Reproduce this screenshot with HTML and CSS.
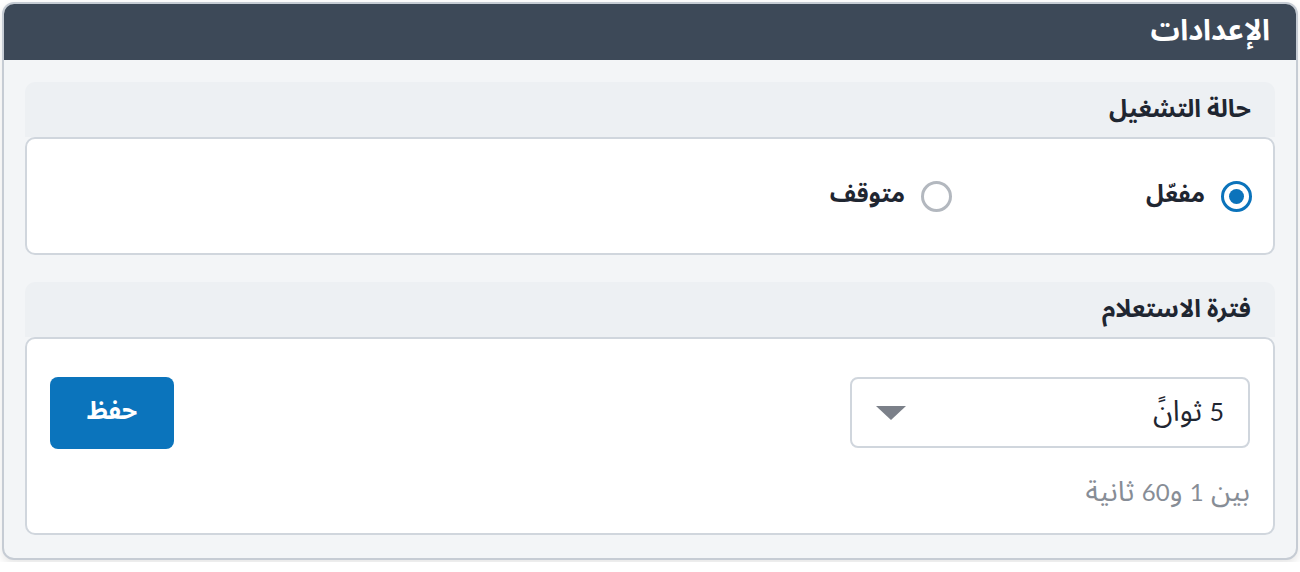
FILE: index.html
```html
<!DOCTYPE html>
<html lang="ar" dir="rtl">
<head>
<meta charset="utf-8">
<title>الإعدادات</title>
<link rel="stylesheet" href="styles.css">
</head>
<body>
<div class="panel">
  <div class="panel-header">الإعدادات</div>
  <div class="panel-body">
    <section class="group">
      <div class="group-title">حالة التشغيل</div>
      <div class="group-box radios">
        <label class="option">
          <span class="radio checked"></span>
          <span class="option-label">مفعّل</span>
        </label>
        <label class="option">
          <span class="radio"></span>
          <span class="option-label">متوقف</span>
        </label>
      </div>
    </section>
    <section class="group">
      <div class="group-title">فترة الاستعلام</div>
      <div class="group-box interval">
        <div class="field">
          <div class="select">
            <span class="select-value"><span class="num">5</span> ثوانً</span>
            <svg class="caret" width="30" height="14" viewBox="0 0 30 14"><polygon points="0,0 30,0 15,14" fill="#7b8089"/></svg>
          </div>
          <div class="hint">بين <span class="num">1</span> و<span class="num">60</span> ثانية</div>
        </div>
        <button class="save">حفظ</button>
      </div>
    </section>
  </div>
</div>
</body>
</html>
```

FILE: styles.css
```css
* { box-sizing: border-box; }
html, body { margin: 0; padding: 0; background: #ffffff; }
body {
  font-family: Lato, "Noto Sans Arabic", "Noto Sans", sans-serif;
  color: #1f2631;
  padding: 2px;
}
.panel {
  width: 1296px;
  height: 558px;
  border: 2px solid #c6ccd4;
  border-radius: 12px;
  overflow: hidden;
  background: #f3f5f7;
  box-shadow: 0 4px 10px rgba(0,0,0,0.1);
}
.panel-header {
  height: 56px;
  background: #3d4958;
  color: #ffffff;
  font-size: 29px;
  font-weight: 700;
  display: flex;
  align-items: center;
  padding: 0 26px 4px;
}
.panel-body {
  padding: 22px 21px 22px;
  display: flex;
  flex-direction: column;
  gap: 27px;
}
.group-title {
  background: #edf0f3;
  border-radius: 10px 10px 0 0;
  height: 55px;
  display: flex;
  align-items: center;
  padding: 0 24px 2px;
  font-size: 24.5px;
  font-weight: 700;
  color: #1f2631;
}
.group-box {
  background: #ffffff;
  border: 2px solid #d0d6dd;
  border-radius: 10px;
}
.radios {
  height: 118px;
  display: flex;
  align-items: center;
  padding: 0 21px 0 22px;
}
.option {
  width: 300px;
  display: flex;
  align-items: center;
  gap: 16px;
  font-size: 24px;
  font-weight: 700;
}
.radio {
  width: 31px;
  height: 31px;
  border-radius: 50%;
  border: 3px solid #b3b8bf;
  background: #ffffff;
  position: relative;
  flex: none;
}
.radio.checked {
  border: 3px solid #0b73bb;
}
.radio.checked::after {
  content: "";
  position: absolute;
  inset: 5px;
  border-radius: 50%;
  background: #0b73bb;
}
.option-label { padding-bottom: 4px; }
.interval {
  height: 198px;
  display: flex;
  justify-content: space-between;
  align-items: flex-start;
  padding: 38px 23px 0;
}
.field {
  display: flex;
  flex-direction: column;
  gap: 14px;
}
.select {
  width: 400px;
  height: 71px;
  border: 2px solid #d0d6dd;
  border-radius: 8px;
  display: flex;
  align-items: center;
  justify-content: space-between;
  padding: 0 24px 0 24px;
  font-size: 29px;
  color: #1f2631;
}
.select-value { padding-bottom: 2px; }
.num { font-size: 25px; }
.hint .num { font-size: 24px; }
.caret { display: block; }
.hint {
  font-size: 28.5px;
  color: #878d96;
}
.save {
  width: 124px;
  height: 72px;
  background: #0b74bc;
  color: #ffffff;
  border: none;
  border-radius: 8px;
  font-family: inherit;
  font-size: 25px;
  font-weight: 700;
  padding: 0 0 4px;
}
```
